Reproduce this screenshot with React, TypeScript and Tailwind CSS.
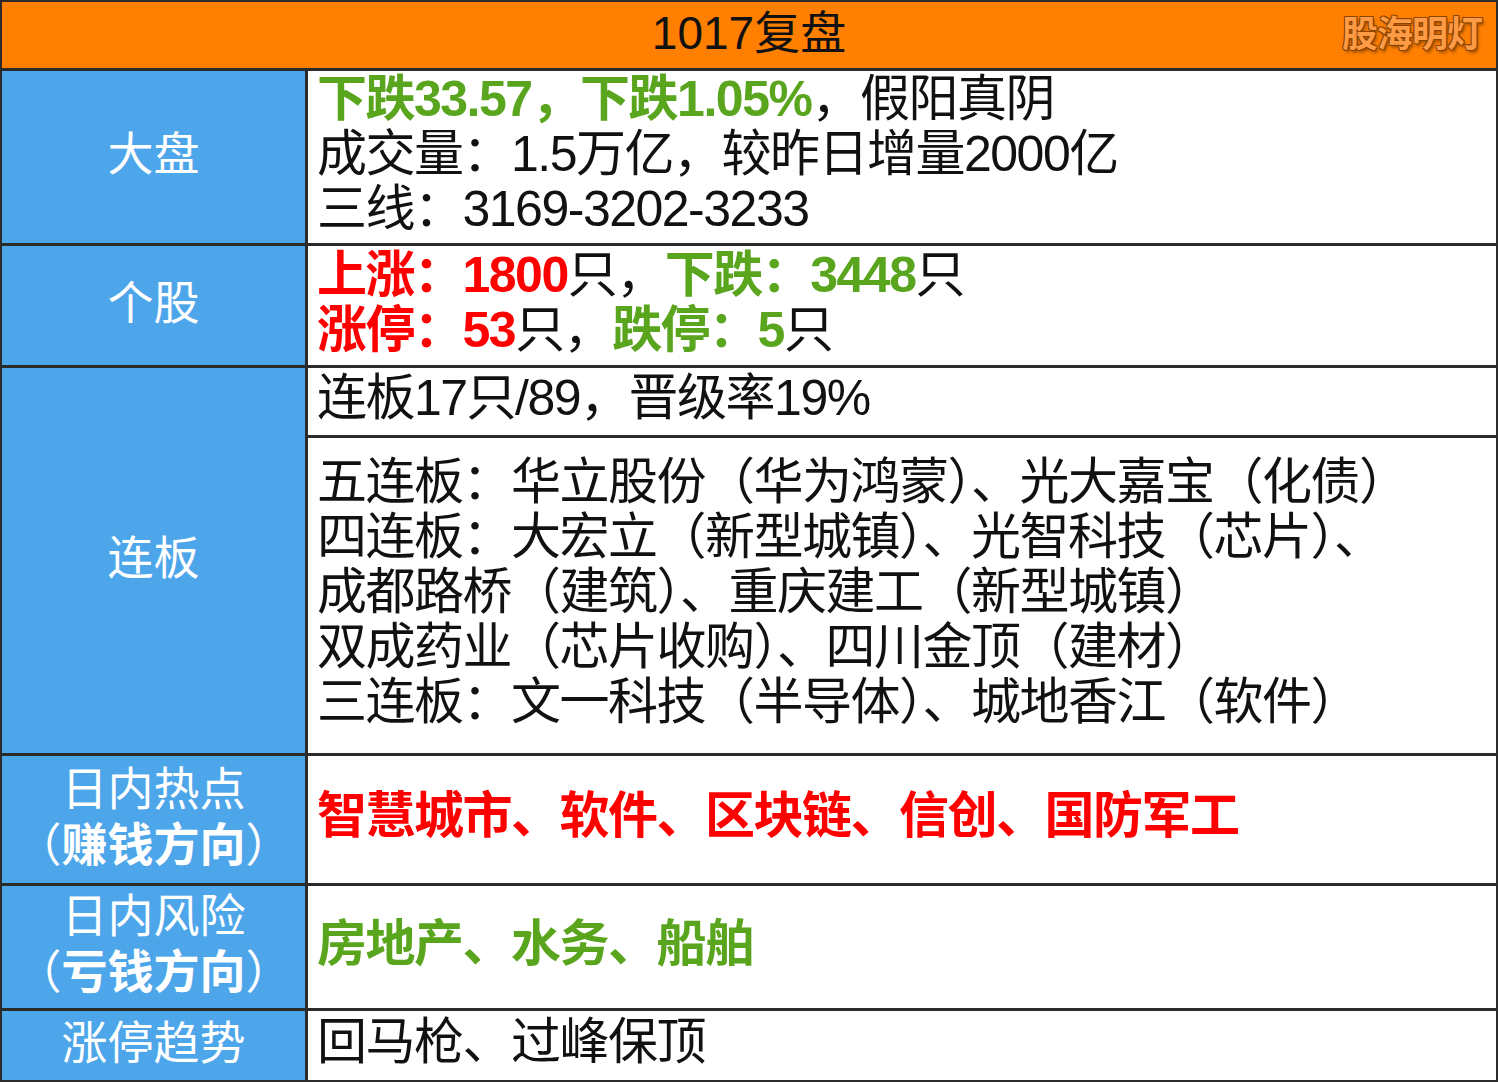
export default function App() {
  const G = "text-[#5aa51e]";
  const R = "text-[#ff0000]";
  const label = "bg-[#4ea6ea] text-white flex flex-col items-center justify-center text-[46px] leading-[56px] pb-[6px]";
  const cell = "bg-white flex flex-col justify-center pl-[9px] pb-[6px] text-[50px] leading-[55px] text-[#111] tracking-[-1.5px]";
  return (
    <div
      className="w-[1498px] h-[1082px] bg-[#2b2b2b] p-[2px] grid grid-cols-[303px_1fr] gap-[3px] grid-rows-[66px_172px_119px_67px_315px_127px_122px_69px]"
      style={{ fontFamily: '"Liberation Sans", "Noto Sans CJK SC", sans-serif' }}
    >
      <div className="col-span-2 bg-[#ff7f00] relative flex items-center justify-center text-[46px] text-[#111] pb-[4px]">
        1017复盘
        <span
          className="absolute right-[14px] top-[6px] text-[36px] font-bold text-[#ff9a45] tracking-[-1px]"
          style={{ textShadow: "-1px -1px 0 #8a4500, 1px -1px 0 #8a4500, -1px 1px 0 #8a4500, 1px 1px 0 #8a4500, 2px 3px 3px rgba(0,0,0,0.35)" }}
        >
          股海明灯
        </span>
      </div>

      <div className={label}>大盘</div>
      <div className={cell}>
        <div><span className={`${G} font-bold`}>下跌33.57，下跌1.05%</span>，假阳真阴</div>
        <div>成交量：1.5万亿，较昨日增量2000亿</div>
        <div>三线：3169-3202-3233</div>
      </div>

      <div className={label}>个股</div>
      <div className={cell}>
        <div><span className={`${R} font-bold`}>上涨：1800</span>只，<span className={`${G} font-bold`}>下跌：3448</span>只</div>
        <div><span className={`${R} font-bold`}>涨停：53</span>只，<span className={`${G} font-bold`}>跌停：5</span>只</div>
      </div>

      <div className={`${label} row-span-2`}>连板</div>
      <div className={cell}>
        <div>连板17只/89，晋级率19%</div>
      </div>
      <div className={cell}>
        <div>五连板：华立股份（华为鸿蒙）、光大嘉宝（化债）</div>
        <div>四连板：大宏立（新型城镇）、光智科技（芯片）、</div>
        <div>成都路桥（建筑）、重庆建工（新型城镇）</div>
        <div>双成药业（芯片收购）、四川金顶（建材）</div>
        <div>三连板：文一科技（半导体）、城地香江（软件）</div>
      </div>

      <div className={label}>
        <div>日内热点</div>
        <div>（<span className="font-bold">赚钱方向</span>）</div>
      </div>
      <div className={cell}>
        <div className={`${R} font-bold`}>智慧城市、软件、区块链、信创、国防军工</div>
      </div>

      <div className={label}>
        <div>日内风险</div>
        <div>（<span className="font-bold">亏钱方向</span>）</div>
      </div>
      <div className={cell}>
        <div className={`${G} font-bold`}>房地产、水务、船舶</div>
      </div>

      <div className={label}>涨停趋势</div>
      <div className={cell}>
        <div>回马枪、过峰保顶</div>
      </div>
    </div>
  );
}
